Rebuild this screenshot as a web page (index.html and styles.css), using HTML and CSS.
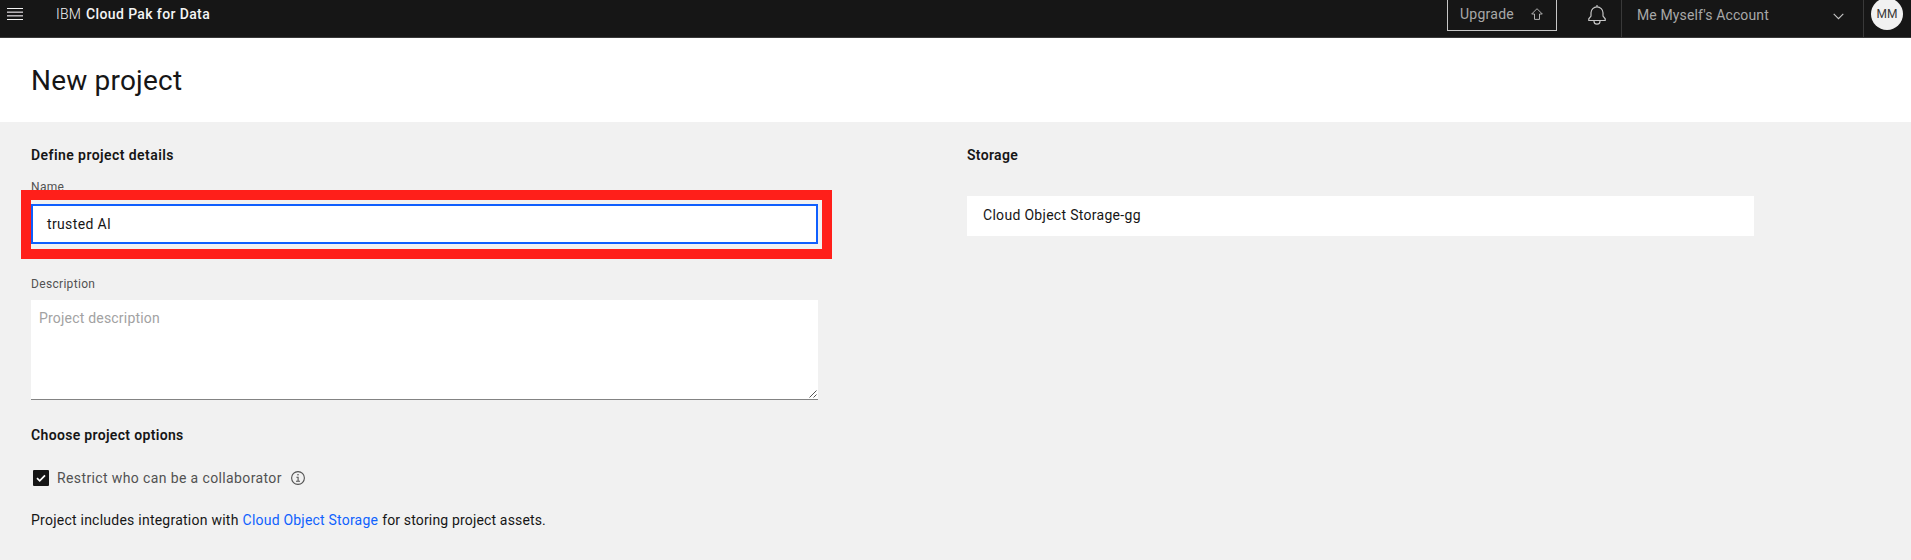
FILE: index.html
```html
<!DOCTYPE html>
<html lang="en">
<head>
<meta charset="utf-8">
<title>New project</title>
<link rel="stylesheet" href="styles.css">
</head>
<body>
<header class="header">
  <svg class="menu" width="16" height="12" viewBox="0 0 16 12" shape-rendering="crispEdges"><path fill="#f4f4f4" d="M0 0h16v1H0zM0 11h16v1H0z"/><path fill="#6f6f6f" d="M0 3h16v1H0zM0 8h16v1H0z"/><path fill="#b5b0b5" d="M0 4h16v1H0zM0 7h16v1H0z"/></svg>
  <div class="brand"><span class="ibm">IBM</span> <span class="product">Cloud Pak for Data</span></div>
  <button class="upgrade"><span class="upgrade-text">Upgrade</span>
    <svg width="12" height="12" viewBox="0 0 12 12" fill="none" stroke="#b0b0b0"><path d="M6 .7 11.3 6H8.5v5.4h-5V6H.7z"/></svg>
  </button>
  <svg class="bell" width="18" height="20" viewBox="0 0 18 20" fill="none" stroke="#c6c6c6" stroke-width="1.2"><path d="M9 0v2M3 11V7.8a6 6 0 0 1 12 0V11l2.2 2.8v1.7H.8v-1.7zM6 15.6v.6a3 3 0 0 0 6 0v-.6"/></svg>
  <div class="account"><span class="account-text">Me Myself's Account</span>
    <svg width="11" height="7" viewBox="0 0 11 7" fill="none" stroke="#c6c6c6" stroke-width="1.1"><path d="M.7.8 5.5 5.6 10.3.8"/></svg>
  </div>
  <div class="user"><div class="avatar"><span>MM</span></div></div>
</header>
<section class="title"><h1>New project</h1></section>
<main class="content">
  <form class="details">
    <h2 class="h-define">Define project details</h2>
    <label class="label l-name">Name</label>
    <div class="name-field"><div class="input">trusted AI</div><div class="highlight"></div></div>
    <label class="label l-desc">Description</label>
    <div class="textarea"><span>Project description</span>
      <svg class="grip" width="8" height="8" viewBox="0 0 8 8" stroke="#555" stroke-width="1"><path d="M.5 7.5l7-7M4.5 7.5l3-3"/></svg>
    </div>
    <h2 class="h-options">Choose project options</h2>
    <div class="option">
      <svg width="16" height="16" viewBox="0 0 16 16"><rect width="16" height="16" rx="1" fill="#161616"/><path d="M4 8.2l2.7 2.7L12 5.4" fill="none" stroke="#fff" stroke-width="1.7"/></svg>
      <span class="option-text">Restrict who can be a collaborator</span>
      <svg width="14" height="14" viewBox="0 0 14 14" fill="none" stroke="#525252" stroke-width="1.1"><circle cx="7" cy="7" r="6.4"/><path d="M5.4 6.2h1.7v4M5 10.2h4"/><circle cx="7" cy="3.8" r=".8" fill="#525252" stroke="none"/></svg>
    </div>
    <p class="note"><span class="n1">Project includes integration with</span> <a class="n2">Cloud Object Storage</a> <span class="n3">for storing project assets.</span></p>
  </form>
  <section class="storage">
    <h2 class="h-storage">Storage</h2>
    <div class="storage-box"><span>Cloud Object Storage-gg</span></div>
  </section>
</main>
</body>
</html>
```
FILE: styles.css
```css
* { box-sizing: border-box; }
body { margin: 0; width: 1911px; height: 560px; overflow: hidden; background: #f1f1f1; color: #161616; font: 14px/18px Roboto, sans-serif; display: flex; flex-direction: column; }
svg { display: block; flex: none; }
h1, h2, p { margin: 0; white-space: nowrap; }
span, a { white-space: nowrap; }
.header { height: 38px; flex: none; background: #161616; border-bottom: 1px solid #393939; display: flex; align-items: flex-start; }
.menu { margin: 8px 0 0 7px; }
.brand { margin: 5px auto 0 33px; color: #f4f4f4; display: flex; gap: 5px; }
.ibm { font-weight: 300; letter-spacing: .2px; }
.product { font-weight: 500; letter-spacing: .38px; }
.upgrade { width: 110px; height: 31px; margin: 0 31px 0 0; padding: 8px 13px 0 12px; background: none; border: 1px solid #c6c6c6; border-top: 0; color: #a8a8a8; font: inherit; display: flex; justify-content: space-between; align-items: flex-start; }
.upgrade-text { margin-top: -3px; letter-spacing: .25px; }
.bell { margin: 5px 15px 0 0; }
.account { width: 242px; height: 37px; border-left: 1px solid #393939; color: #a8a8a8; display: flex; justify-content: space-between; padding: 6px 19px 0 15px; }
.account-text { letter-spacing: .13px; }
.account svg { margin-top: 7px; }
.user { width: 48px; height: 37px; border-left: 1px solid #393939; padding-left: 7px; }
.avatar { width: 32px; height: 32px; margin-top: -2px; border-radius: 50%; background: #f1f1f1; color: #393939; font-size: 12px; display: flex; justify-content: center; align-items: center; }
.title { height: 84px; flex: none; background: #fff; padding: 25px 31px; }
h1 { font-size: 28px; line-height: 36px; font-weight: 400; letter-spacing: .2px; }
.content { display: grid; grid-template-columns: 787px 787px; column-gap: 149px; padding: 24px 31px 0; }
.details { display: flex; flex-direction: column; }
h2 { font-size: 14px; line-height: 18px; font-weight: 600; letter-spacing: .33px; }
.h-define { letter-spacing: .43px; }
.label { font-size: 12px; line-height: 16px; color: #525252; letter-spacing: .32px; }
.l-name { margin-top: 15px; }
.name-field { position: relative; margin-top: 9px; }
.input { height: 40px; border: 2px solid #0f5ffe; background: #fff; padding: 9px 14px; letter-spacing: .36px; }
.highlight { position: absolute; left: -10px; top: -14px; width: 811px; height: 69px; border: 10px solid #ff1f1a; }
.l-desc { margin-top: 32px; }
.textarea { height: 100px; margin-top: 8px; background: #fff; border-bottom: 1px solid #838383; color: #a2a2a2; padding: 9px 1px 1px 8px; letter-spacing: .2px; display: flex; justify-content: space-between; }
.grip { align-self: flex-end; }
.h-options { margin-top: 26px; }
.option { margin-top: 25px; height: 18px; padding-left: 2px; display: flex; align-items: center; color: #525252; }
.option-text { width: 228px; margin-left: 8px; margin-right: 6px; letter-spacing: .38px; }
.note { margin-top: 24px; display: flex; gap: 4px; }
.note a { color: #0f62fe; }
.n1 { letter-spacing: .24px; }
.n2 { letter-spacing: .21px; }
.n3 { letter-spacing: .16px; }
.storage-box { height: 40px; margin-top: 32px; background: #fff; padding: 10px 16px; letter-spacing: .3px; }
```
